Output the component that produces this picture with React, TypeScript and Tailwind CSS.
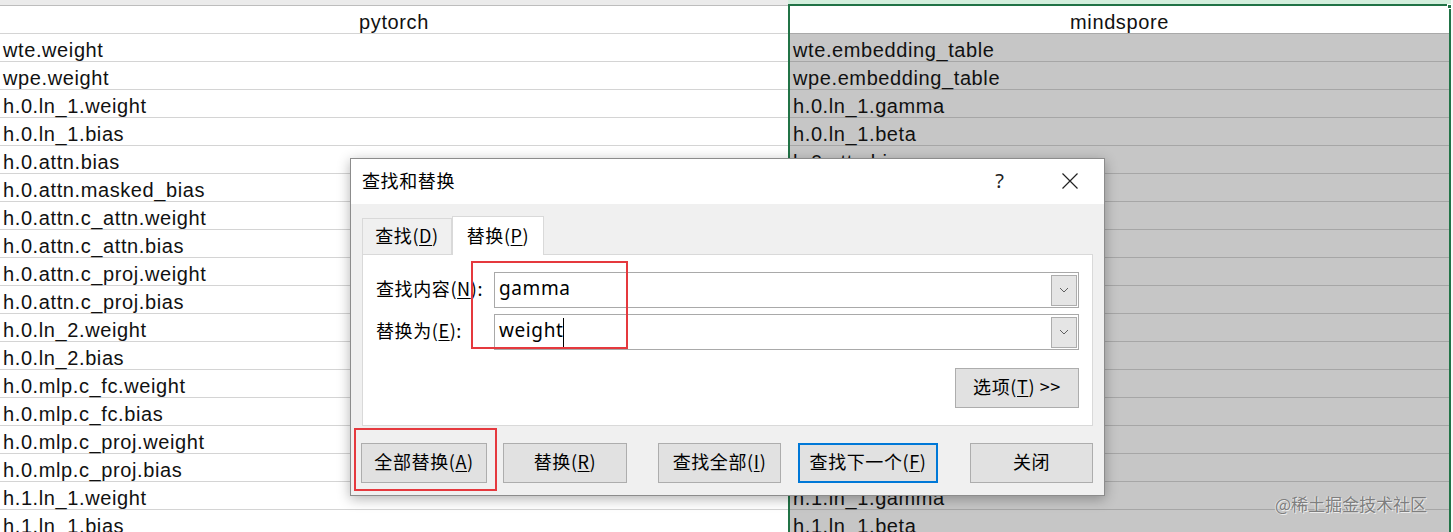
import React from "react";

const pytorchRows = [
  "wte.weight",
  "wpe.weight",
  "h.0.ln_1.weight",
  "h.0.ln_1.bias",
  "h.0.attn.bias",
  "h.0.attn.masked_bias",
  "h.0.attn.c_attn.weight",
  "h.0.attn.c_attn.bias",
  "h.0.attn.c_proj.weight",
  "h.0.attn.c_proj.bias",
  "h.0.ln_2.weight",
  "h.0.ln_2.bias",
  "h.0.mlp.c_fc.weight",
  "h.0.mlp.c_fc.bias",
  "h.0.mlp.c_proj.weight",
  "h.0.mlp.c_proj.bias",
  "h.1.ln_1.weight",
  "h.1.ln_1.bias",
];

const mindsporeRows = [
  "wte.embedding_table",
  "wpe.embedding_table",
  "h.0.ln_1.gamma",
  "h.0.ln_1.beta",
  "h.0.attn.bias",
  "h.0.attn.masked_bias",
  "h.0.attn.c_attn.weight",
  "h.0.attn.c_attn.bias",
  "h.0.attn.c_proj.weight",
  "h.0.attn.c_proj.bias",
  "h.0.ln_2.gamma",
  "h.0.ln_2.beta",
  "h.0.mlp.c_fc.weight",
  "h.0.mlp.c_fc.bias",
  "h.0.mlp.c_proj.weight",
  "h.0.mlp.c_proj.bias",
  "h.1.ln_1.gamma",
  "h.1.ln_1.beta",
];

function Chevron() {
  return (
    <svg width="10" height="6" viewBox="0 0 10 6" fill="none">
      <path d="M1 1 L5 5 L9 1" stroke="#606060" strokeWidth="1" />
    </svg>
  );
}

function Combo({ children }: { children: React.ReactNode }) {
  return (
    <div className="flex-1 h-[36px] border border-[#a9a9a9] bg-white flex items-center">
      <div className="flex-1 pl-[4px] pb-[4px] text-[19px] font-['Noto_Sans',sans-serif] text-black flex items-center">
        {children}
      </div>
      <div className="w-[26px] h-[31px] mr-[1px] bg-[#e5e5e5] border border-[#adadad] flex items-center justify-center">
        <Chevron />
      </div>
    </div>
  );
}

function Btn({
  children,
  className,
  primary,
}: {
  children: React.ReactNode;
  className: string;
  primary?: boolean;
}) {
  return (
    <div
      className={
        "h-[40px] pb-[3px] bg-[#e1e1e1] flex items-center justify-center text-[18px] text-black whitespace-nowrap " +
        (primary ? "border-2 border-[#0078d7] " : "border border-[#adadad] ") +
        className
      }
    >
      {children}
    </div>
  );
}

function Dialog() {
  return (
    <div className="absolute left-[350px] top-[158px] w-[755px] h-[338px] border border-[#8c8c8c] bg-[#f0f0f0] shadow-[0_3px_12px_rgba(0,0,0,0.3)] font-['Noto_Sans_CJK_SC',sans-serif] text-black">
      {/* title bar */}
      <div className="h-[45px] pb-[2px] bg-white flex items-center pl-[11px] pr-[26px]">
        <span className="text-[18px]">查找和替换</span>
        <span className="ml-auto mr-[52px] w-[20px] text-center text-[20px] font-['Noto_Sans',sans-serif] text-[#222]">?</span>
        <svg width="16" height="16" viewBox="0 0 16 16">
          <path d="M0.5 0.5 L15.5 15.5 M15.5 0.5 L0.5 15.5" stroke="#222" strokeWidth="1.2" />
        </svg>
      </div>

      <div className="pt-[12px] px-[11px]">
        {/* tabs */}
        <div className="flex items-end h-[38px]">
          <div className="w-[90px] h-[36px] pb-[2px] border border-b-0 border-[#d9d9d9] flex items-center justify-center text-[18px]">
            查找(<span className="underline underline-offset-2">D</span>)
          </div>
          <div className="w-[92px] h-[39px] pb-[2px] -mb-px border border-b-0 border-[#d9d9d9] bg-white flex items-center justify-center text-[18px] relative z-10">
            替换(<span className="underline underline-offset-2">P</span>)
          </div>
        </div>

        {/* panel */}
        <div className="h-[172px] border border-[#d9d9d9] bg-white px-[13px] pt-[17px]">
          <div className="flex items-center">
            <div className="w-[118px] pb-[3px] text-[18px]">
              查找内容(<span className="underline underline-offset-2">N</span>):
            </div>
            <Combo>gamma</Combo>
          </div>
          <div className="flex items-center mt-[6px]">
            <div className="w-[118px] pb-[3px] text-[18px]">
              替换为(<span className="underline underline-offset-2">E</span>):
            </div>
            <Combo>
              weight<span className="inline-block w-px h-[29px] mt-[4px] bg-black" />
            </Combo>
          </div>
          <div className="flex justify-end mt-[18px]">
            <Btn className="w-[124px]">
              选项(<span className="underline underline-offset-2">T</span>)&nbsp;&gt;&gt;
            </Btn>
          </div>
        </div>

        {/* buttons */}
        <div className="flex mt-[17px] -ml-px">
          <Btn className="w-[126px]">
            全部替换(<span className="underline underline-offset-2">A</span>)
          </Btn>
          <Btn className="w-[124px] ml-[16px]">
            替换(<span className="underline underline-offset-2">R</span>)
          </Btn>
          <Btn className="w-[123px] ml-[31px]">
            查找全部(<span className="underline underline-offset-2">I</span>)
          </Btn>
          <Btn className="w-[140px] ml-[17px]" primary>
            查找下一个(<span className="underline underline-offset-2">F</span>)
          </Btn>
          <Btn className="w-[123px] ml-[32px]">关闭</Btn>
        </div>
      </div>

      {/* red highlight boxes */}
      <div className="absolute left-[120px] top-[102px] w-[157px] h-[88px] border-2 border-[#e5393e] pointer-events-none" />
      <div className="absolute left-[3px] top-[269px] w-[143px] h-[63px] border-2 border-[#e5393e] pointer-events-none" />
    </div>
  );
}

export default function App() {
  return (
    <div className="relative w-[1453px] h-[532px] overflow-hidden bg-white font-['Liberation_Sans',sans-serif] text-[20px] tracking-[0.6px] text-[#111]">
      <div className="flex">
        {/* pytorch column */}
        <div className="w-[788px]">
          <div className="h-[6px] bg-[#ebebeb] border-b border-[#bdbdbd]" />
          <div className="h-[28px] border-b border-[#d4d4d4] text-center pt-[5px] leading-[22px]">pytorch</div>
          {pytorchRows.map((r) => (
            <div key={r} className="h-[28px] border-b border-[#d4d4d4] pl-[3px] pt-[5px] leading-[22px] whitespace-nowrap">
              {r}
            </div>
          ))}
        </div>

        {/* mindspore column (selected) */}
        <div className="w-[663px]">
          <div className="h-[4px] bg-[#d3efdd]" />
          <div className="relative border-t-2 border-x-2 border-[#217346]">
            <div className="h-[28px] border-b border-[#a9a9a9] bg-white text-center pt-[5px] leading-[22px]">mindspore</div>
            {mindsporeRows.map((r) => (
              <div key={r} className="h-[28px] border-b border-[#a6a6a6] bg-[#c6c6c6] pl-[3px] pt-[5px] leading-[22px] whitespace-nowrap">
                {r}
              </div>
            ))}
            <div className="absolute -top-[2px] -right-[3px] w-[5px] h-[5px] bg-[#217346] border border-white" />
          </div>
        </div>
        <div className="w-[2px] bg-[#f8f8f8]" />
      </div>

      <Dialog />

      <div className="absolute left-[1275px] top-[491px] text-[17px] tracking-normal font-['Noto_Sans_CJK_SC',sans-serif] text-[#7e7e7e] [text-shadow:1px_1px_0_#ececec,-1px_0_0_#e0e0e0]">
        @稀土掘金技术社区
      </div>
    </div>
  );
}
